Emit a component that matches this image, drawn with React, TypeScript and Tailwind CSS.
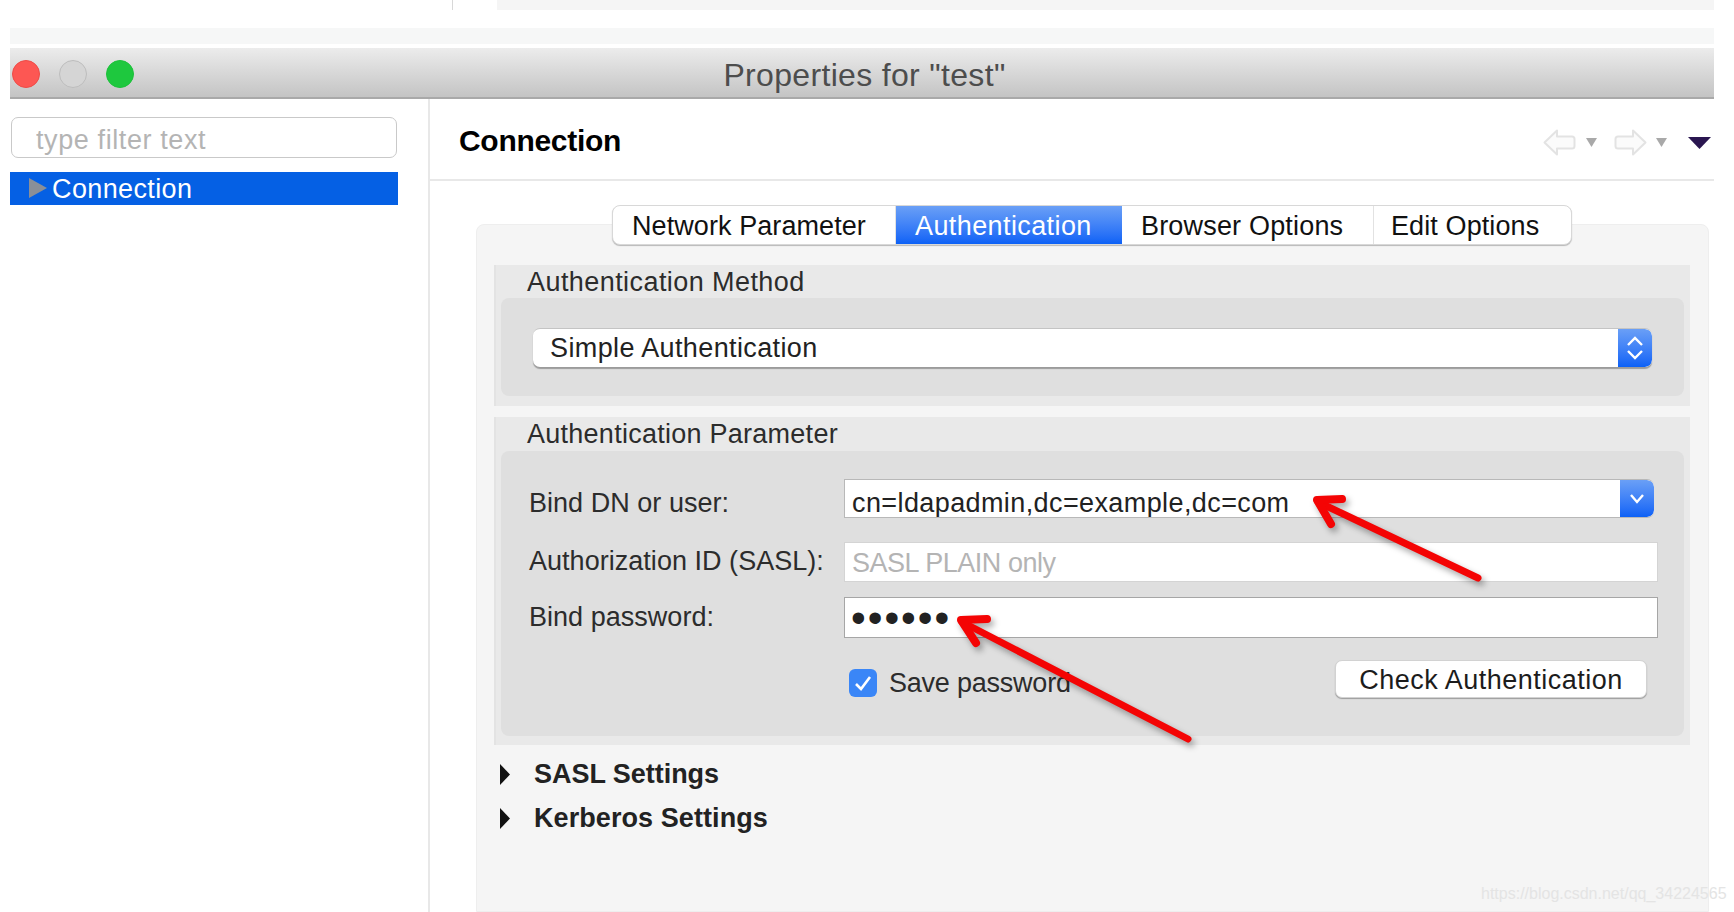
import type { ReactNode } from 'react'

const tabs = [
  { label: 'Network Parameter', width: 'w-[283px]', tracking: 'tracking-[0.08px]', active: false },
  { label: 'Authentication', width: 'w-[226px]', tracking: 'tracking-[0.4px]', active: true },
  { label: 'Browser Options', width: 'w-[252px]', tracking: 'tracking-[0.18px]', active: false },
  { label: 'Edit Options', width: 'w-[197px]', tracking: 'tracking-[0.1px]', active: false },
]

function NavArrow({ flip }: { flip?: boolean }) {
  return (
    <svg width="33" height="27" viewBox="0 0 33 27" className={flip ? '-scale-x-100' : ''}>
      <path
        d="M1.5 13.5 L14 1.5 V7.5 H29 Q31.5 7.5 31.5 10 V17 Q31.5 19.5 29 19.5 H14 V25.5 Z"
        fill="#fbfbfb"
        stroke="#e3e3e3"
        strokeWidth="2"
        strokeLinejoin="round"
      />
    </svg>
  )
}

function SmallDown({ w, h, fill }: { w: number; h: number; fill: string }) {
  return (
    <svg width={w} height={h} viewBox={`0 0 ${w} ${h}`}>
      <path d={`M0 0 H${w} L${w / 2} ${h} Z`} fill={fill} />
    </svg>
  )
}

function Light({ className }: { className: string }) {
  return <div className={`h-[28px] w-[28px] rounded-full border ${className}`} />
}

function Group({ title, tracking, children, className }: { title: string; tracking: string; children: ReactNode; className: string }) {
  return (
    <section className={`border-l-2 border-[#e3e3e3] bg-[#e9e9e9] ${className}`}>
      <div className={`flex h-[33px] items-center pl-[31px] pt-[2px] text-[27px] text-[#2c2c2c] ${tracking}`}>{title}</div>
      {children}
    </section>
  )
}

function BlueCap({ children }: { children: ReactNode }) {
  return (
    <div className="flex w-[34px] shrink-0 items-center justify-center rounded-r-[7px] bg-gradient-to-b from-[#6a9ff6] to-[#0b61f6]">
      {children}
    </div>
  )
}

function FieldLabel({ children, className }: { children: ReactNode; className?: string }) {
  return <div className={`text-[27px] leading-[30px] tracking-[0.03px] text-[#2c2c2c] ${className ?? ''}`}>{children}</div>
}

function Expander({ label, tracking }: { label: string; tracking: string }) {
  return (
    <div className="flex h-[30px] items-center gap-[24px] pl-[6px]">
      <svg width="10" height="21" viewBox="0 0 10 21">
        <path d="M0 0 L10 10.5 L0 21 Z" fill="#111" />
      </svg>
      <span className={`text-[27px] font-bold text-[#222] ${tracking}`}>{label}</span>
    </div>
  )
}

export default function App() {
  return (
    <div className="relative h-[912px] w-[1734px] overflow-hidden bg-white pl-[10px] pr-[20px] font-['Liberation_Sans',Arial,sans-serif]">
      {/* leftovers of the window behind */}
      <div className="flex h-[10px]">
        <div className="w-[443px] border-r border-[#d8d8d8]" />
        <div className="ml-[44px] flex-1 bg-[#f5f5f5]" />
      </div>
      <div className="mt-[18px] h-[16px] bg-[#f6f7f7]" />

      {/* Title bar */}
      <div className="mt-[4px] flex h-[51px] items-center border-b-2 border-[#a9a9a9] bg-gradient-to-b from-[#ececec] to-[#c4c4c4] pt-[2px]">
        <div className="flex flex-1 items-center gap-[19px] pl-[2px]">
          <Light className="border-[#ee4b47] bg-[#fd5753]" />
          <Light className="border-[#bdbdbd] bg-[#d5d5d5]" />
          <Light className="border-[#1cc13a] bg-[#1ec83e]" />
        </div>
        <div className="pl-[3px] pt-[2px] text-[32px] tracking-[0.33px] text-[#4d4d4d]">Properties for "test"</div>
        <div className="flex-1" />
      </div>

      <div className="flex h-[813px]">
        {/* Sidebar */}
        <aside className="w-[420px] shrink-0 border-r-2 border-[#e8e8e8] pt-[18px]">
          <input
            readOnly
            placeholder="type filter text"
            className="ml-[1px] block h-[41px] w-[386px] rounded-[7px] border border-[#c9c9c9] pl-[24px] pt-[6px] text-[27px] leading-[30px] tracking-[0.6px] outline-none placeholder:text-[#b4b4b4]"
          />
          <div className="mt-[14px] flex h-[33px] w-[388px] items-center bg-[#0560e4] pl-[19px]">
            <svg width="18" height="20" viewBox="0 0 18 20" className="mb-[2px]">
              <path d="M0 0 L18 10 L0 20 Z" fill="#8a8f98" />
            </svg>
            <span className="ml-[5px] text-[27px] leading-[30px] tracking-[0.38px] text-white">Connection</span>
          </div>
        </aside>

        {/* Main */}
        <main className="flex min-w-0 flex-1 flex-col">
          <header className="flex h-[82px] shrink-0 items-center border-b-2 border-[#e8e8e8] pl-[29px] pr-[3px] pt-[7px]">
            <h1 className="mb-[4px] text-[30px] font-bold tracking-[-0.3px] text-black">Connection</h1>
            <div className="ml-auto flex items-center">
              <NavArrow />
              <div className="ml-[10px]"><SmallDown w={11} h={9} fill="#a9a9a9" /></div>
              <div className="ml-[17px]"><NavArrow flip /></div>
              <div className="ml-[9px]"><SmallDown w={11} h={9} fill="#a9a9a9" /></div>
              <div className="ml-[21px]"><SmallDown w={23} h={12} fill="#2a1650" /></div>
            </div>
          </header>

          {/* Tabs */}
          <div className="relative z-10 ml-[182px] mt-[24px] flex h-[40px] w-fit overflow-hidden rounded-[8px] border border-[#d8d8d8] bg-white shadow-[0_1px_1px_rgba(0,0,0,0.25)]">
            {tabs.map(({ label, width, tracking, active }) => (
              <div
                key={label}
                className={`flex items-center pl-[19px] pt-[2px] text-[27px] leading-[30px] ${width} ${tracking} ${
                  active
                    ? 'bg-gradient-to-b from-[#6a9ff6] to-[#0b61f6] text-white'
                    : 'border-r border-[#e2e2e2] text-[#111] last:border-r-0 last:pl-[17px]'
                }`}
              >
                {label}
              </div>
            ))}
          </div>

          {/* Folder body */}
          <div className="ml-[46px] mr-[5px] -mt-[21px] flex-1 rounded-t-[8px] border border-[#eeeeee] bg-[#f5f5f5] pl-[17px] pr-[18px] pt-[40px]">
            <Group title="Authentication Method" tracking="tracking-[0.43px]" className="h-[141px]">
              <div className="ml-[5px] mr-[6px] h-[98px] rounded-[8px] bg-[#dfdfdf] pl-[32px] pr-[32px] pt-[30px]">
                <div className="flex h-[39px] overflow-hidden rounded-[7px] border-t border-[#c4c4c4] bg-white shadow-[0_2px_1px_rgba(0,0,0,0.3)]">
                  <div className="flex flex-1 items-center pl-[17px] text-[27px] leading-[30px] tracking-[0.38px] text-[#222]">
                    Simple Authentication
                  </div>
                  <BlueCap>
                    <svg width="18" height="26" viewBox="0 0 18 26" fill="none" stroke="#fff" strokeWidth="2.4">
                      <path d="M2 10 L9 3 L16 10" />
                      <path d="M2 16 L9 23 L16 16" />
                    </svg>
                  </BlueCap>
                </div>
              </div>
            </Group>

            <Group title="Authentication Parameter" tracking="tracking-[0.26px]" className="mt-[11px] h-[328px]">
              <div className="ml-[5px] mr-[6px] mt-[1px] h-[285px] rounded-[8px] bg-[#dfdfdf] pl-[28px] pr-[26px] pt-[28px]">
                <div className="grid grid-cols-[315px_1fr] grid-rows-[39px_64px_56px] items-center">
                  <FieldLabel className="pt-[8px]">Bind DN or user:</FieldLabel>
                  <div className="mr-[4px] flex h-[39px] overflow-hidden rounded-r-[7px] border-y border-l border-[#b8b8b8] bg-white">
                    <div className="flex flex-1 items-center pl-[7px] pt-[8px] text-[27px] leading-[30px] tracking-[0.4px] text-[#222]">
                      cn=ldapadmin,dc=example,dc=com
                    </div>
                    <BlueCap>
                      <svg width="16" height="12" viewBox="0 0 16 12" fill="none" stroke="#fff" strokeWidth="2.4">
                        <path d="M2 2 L8 9 L14 2" />
                      </svg>
                    </BlueCap>
                  </div>

                  <FieldLabel className="mt-[22px]">Authorization ID (SASL):</FieldLabel>
                  <input
                    readOnly
                    placeholder="SASL PLAIN only"
                    className="mt-[24px] h-[40px] border border-[#d4d4d4] bg-white pl-[7px] pt-[2px] text-[27px] leading-[30px] tracking-[-0.47px] outline-none placeholder:text-[#b4b4b4]"
                  />

                  <FieldLabel className="mt-[14px]">Bind password:</FieldLabel>
                  <div className="mt-[15px] flex h-[41px] items-center border border-[#a6a6a6] bg-white pl-[6px] text-[42px] leading-none tracking-[2px] text-[#222]">
                    ••••••
                  </div>
                </div>

                <div className="mt-[22px] flex items-start justify-between pl-[320px] pr-[11px]">
                  <div className="flex items-center gap-[12px] pt-[8px]">
                    <div className="flex h-[28px] w-[28px] items-center justify-center rounded-[6px] bg-[#3a86f7]">
                      <svg width="18" height="16" viewBox="0 0 18 16" fill="none" stroke="#fff" strokeWidth="2.6">
                        <path d="M2 9 L7 14 L16 2" />
                      </svg>
                    </div>
                    <span className="text-[27px] leading-[30px] tracking-[-0.22px] text-[#2c2c2c]">Save password</span>
                  </div>
                  <button className="h-[38px] w-[312px] rounded-[7px] border border-[#d2d2d2] bg-white pt-[2px] text-[27px] leading-[30px] tracking-[0.5px] text-[#1c1c1c] shadow-[0_1px_1px_rgba(0,0,0,0.3)]">
                    Check Authentication
                  </button>
                </div>
              </div>
            </Group>

            <div className="mt-[14px] flex flex-col gap-[14px]">
              <Expander label="SASL Settings" tracking="tracking-[-0.04px]" />
              <Expander label="Kerberos Settings" tracking="tracking-[0.08px]" />
            </div>
          </div>
        </main>
      </div>

      {/* Red annotation arrows drawn over the dialog */}
      <svg className="pointer-events-none absolute inset-0 z-20 h-full w-full drop-shadow-[3px_4px_3px_rgba(0,0,0,0.35)]" viewBox="0 0 1734 912">
        <g fill="none" stroke="#f40404" strokeWidth="8" strokeLinecap="round" strokeLinejoin="round">
          <path d="M1478 578 L1318 502" strokeWidth="7" />
          <path d="M1342 499 L1317 500 L1331 524" />
          <path d="M1188 739 L962 622" strokeWidth="7" />
          <path d="M987 619 L961 620 L976 643" />
        </g>
      </svg>

      {/* Watermark */}
      <div className="absolute left-[1481px] top-[884px] z-20 text-[16px] leading-[20px] text-[#e4e4e4]">
        https://blog.csdn.net/qq_34224565
      </div>
    </div>
  )
}
